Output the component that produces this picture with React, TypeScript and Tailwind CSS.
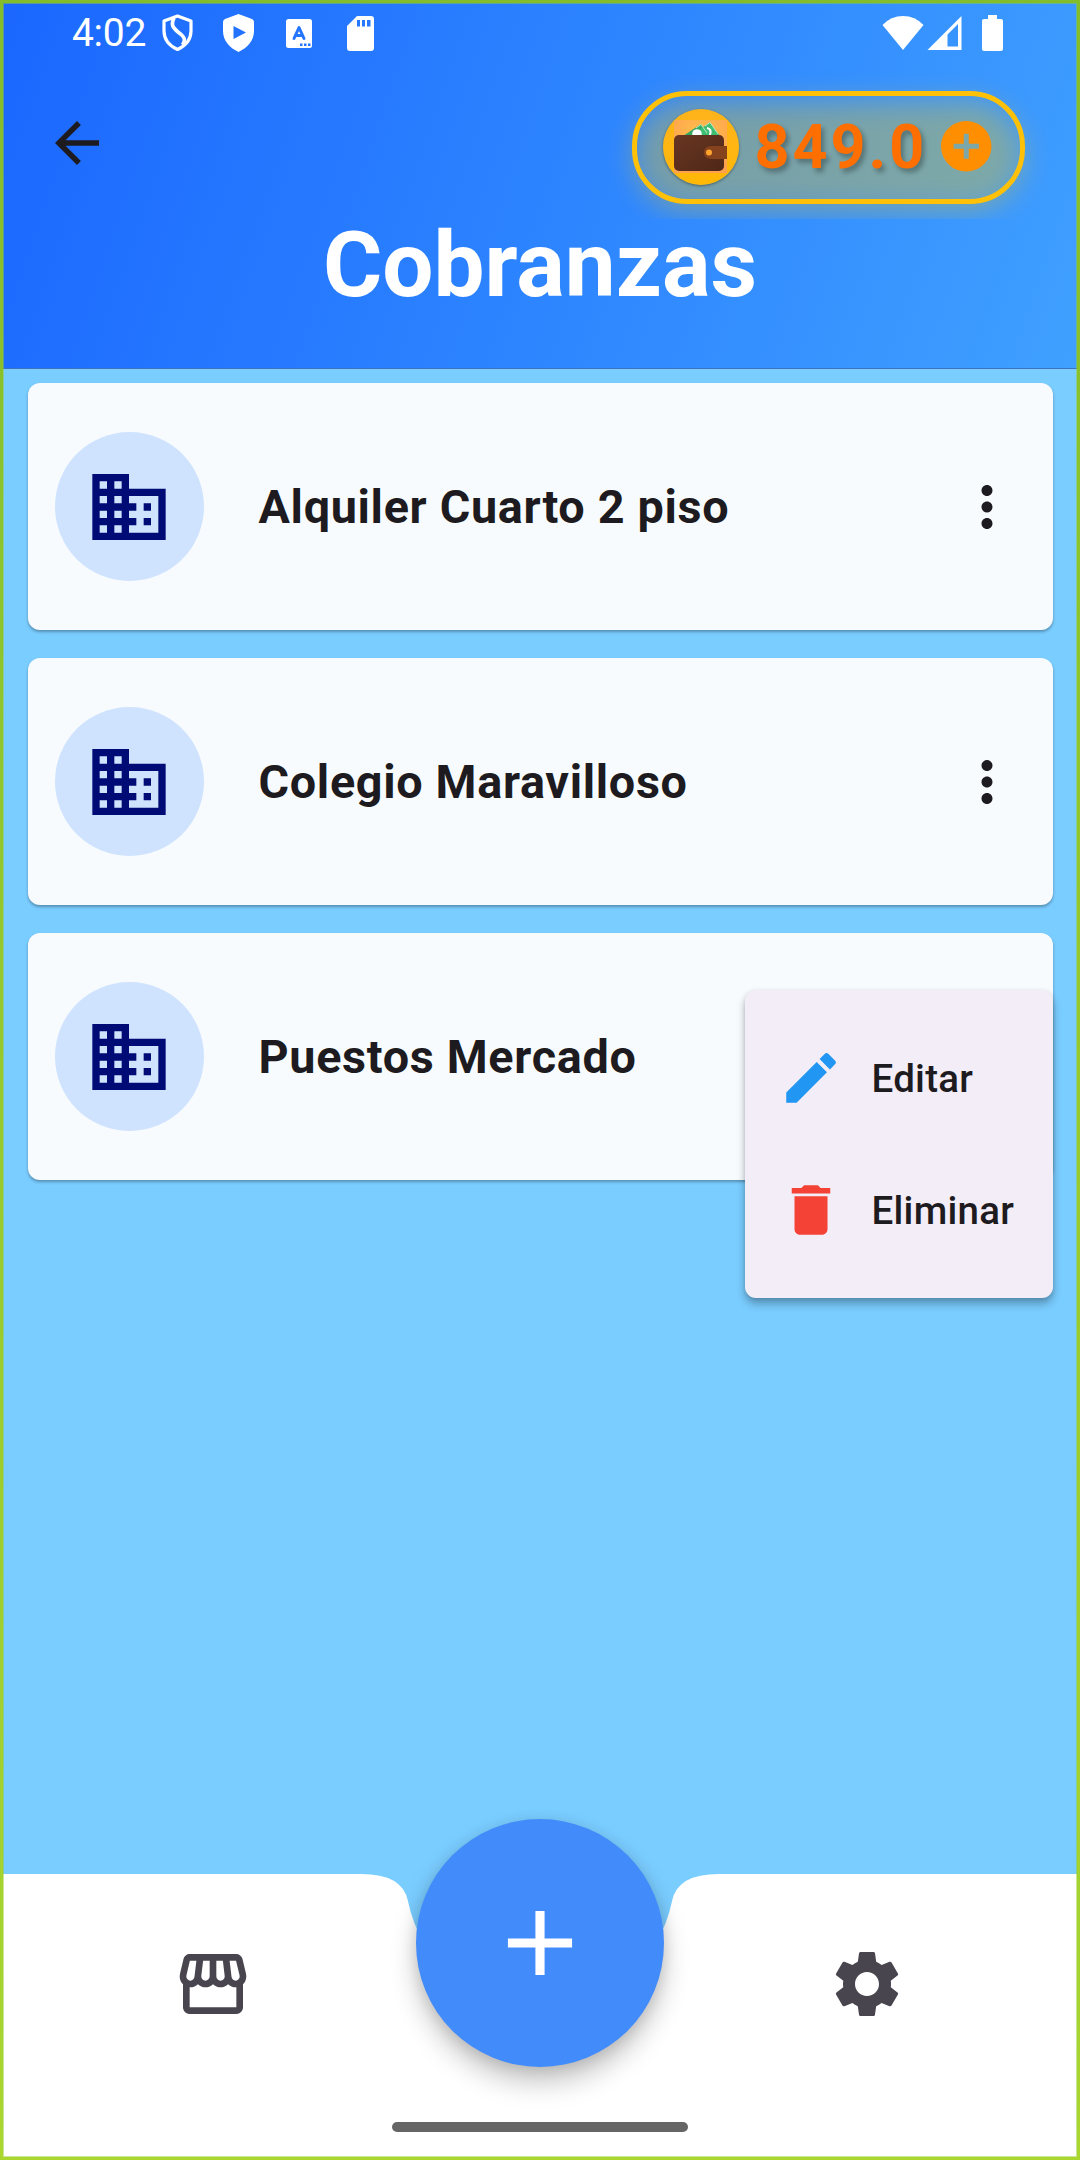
import React from "react";
import { MdArrowBack, MdAddCircle, MdBusiness, MdMoreVert, MdEdit, MdDelete, MdSettings, MdAdd, MdOutlineStorefront } from "react-icons/md";

function StatusBar() {
  return (
    <div className="flex h-[66px] items-center justify-between pl-[72px] pr-[77px] text-white">
      <div className="flex items-center">
        <span className="w-[76px] text-[39px] leading-[66px] tracking-[-0.3px]">4:02</span>
        <svg className="ml-[14px] h-[38px] w-[31px]" viewBox="0 0 31 38" fill="none" stroke="currentColor" strokeWidth="3.2">
          <path d="M15.500 2 L29 7 V17 C29 26 23 32 15.500 35.500 C8 32 2 26 2 17 V7 Z" strokeLinejoin="round" />
          <path d="M12 4 C9 10 10 13 16 18 C23 23 24 26 20.500 31" strokeWidth="3.600" />
        </svg>
        <svg className="ml-[30px] h-[38px] w-[31px]" viewBox="0 0 31 38" fill="currentColor">
          <path fillRule="evenodd" d="M15.500 0 L29 5 Q31 6 31 8 V17 C31 27 24 34 15.500 38 C7 34 0 27 0 17 V8 Q0 6 2 5 Z M10.500 12 V25 L23 18.500 Z" />
        </svg>
        <svg className="ml-[32px] h-[29px] w-[26px]" viewBox="0 0 26 29">
          <rect width="26" height="29" rx="2.500" fill="white" />
          <path d="M8 19.500 L13 8.500 L18 19.500 M9.500 16.500 H16.500" stroke="#2475ff" strokeWidth="3" fill="none" strokeLinejoin="round" strokeLinecap="round" />
          <path d="M14 24.500h2.500v2.500h-2.500zM18 24.500h2.500v2.500h-2.500zM22 24.500h2.500v2.500h-2.500z" fill="#2475ff" />
        </svg>
        <svg className="ml-[35px] h-[35px] w-[27px]" viewBox="0 0 27 35" fill="currentColor">
          <path fillRule="evenodd" d="M10 0 H24 Q27 0 27 3 V32 Q27 35 24 35 H3 Q0 35 0 32 V10 Z M10 4 V10.500 H13 V4 Z M15 4 V10.500 H18 V4 Z M20 4 V10.500 H23.500 V4 Z" />
        </svg>
      </div>
      <div className="flex items-center text-white">
        <svg className="h-[36px] w-[42px]" viewBox="0 0 42 36" fill="currentColor"><path d="M0.500 10 Q9 1 21 1 Q33 1 41.500 10 L21 35 Z" /></svg>
        <svg className="ml-[3px] h-[36px] w-[35px]" viewBox="0 0 35 36" fill="currentColor"><path fillRule="evenodd" d="M34.500 1 V35 H0.500 Z M31 9 L20.500 19.500 V31.500 H31 Z" /></svg>
        <svg className="ml-[20px] h-[36px] w-[21px]" viewBox="0 0 21 36" fill="currentColor"><path d="M6 0 H15 V4 H19 Q21 4 21 6 V34 Q21 36 19 36 H2 Q0 36 0 34 V6 Q0 4 2 4 H6 Z" /></svg>
      </div>
    </div>
  );
}

function Wallet() {
  return (
    <svg className="h-[53px] w-[53px]" viewBox="0 0 53 53">
      <defs>
        <linearGradient id="leather" x1="0" y1="0" x2="1" y2="1">
          <stop offset="0" stopColor="#693621" />
          <stop offset="1" stopColor="#4e2718" />
        </linearGradient>
        <radialGradient id="backdrop" cx="0.5" cy="0.3" r="0.7">
          <stop offset="0" stopColor="#ffc04a" />
          <stop offset="1" stopColor="#ffa24f" />
        </radialGradient>
      </defs>
      <rect width="53" height="53" fill="url(#backdrop)" />
      <path d="M9 16 L27 4 L34 16 Z" fill="#35a862" />
      <path d="M16 16 L36 2.500 L46 16 Z" fill="#3fbd70" />
      <path d="M22 8 L27 4.500 L33 13 M31 6 L36 2.500 L44 14" stroke="#b9e8c7" strokeWidth="1" fill="none" />
      <path d="M33 8 Q38 9 36 15" stroke="#fff" strokeWidth="2.200" fill="none" />
      <circle cx="23" cy="14" r="4.800" fill="#fff" />
      <rect x="0" y="15" width="50" height="36" rx="5" fill="url(#leather)" />
      <path d="M53 26 H37 Q30 26 30 32.500 Q30 39 37 39 H53 Z" fill="#85421d" />
      <circle cx="35" cy="32.500" r="3" fill="#ffa52e" />
    </svg>
  );
}

function Balance() {
  return (
    <div className="relative h-[113px] w-[393px]">
      <div className="absolute -inset-x-[55px] -bottom-[15px] -top-[60px] overflow-hidden">
        <div className="absolute inset-x-[57px] bottom-[9px] top-[70px] rounded-[56px] bg-[#ffc800]/34 blur-[14px]" />
      </div>
      <div className="relative flex h-full items-center rounded-[55px] border-[5.5px] border-[#ffc107] pl-[25.500px]">
        <div className="mb-[2px] flex size-[76px] shrink-0 items-center justify-center rounded-full bg-linear-to-b from-[#ffb31a] to-[#ffb805] shadow-[0_1px_3px_rgba(0,0,0,0.4)]">
          <Wallet />
        </div>
        <span className="mb-[2px] ml-[16px] w-[177px] text-[61px] font-bold leading-[70px] tracking-[3px] text-[#ff6f00] [text-shadow:3px_4px_5px_rgba(0,0,0,0.3)]">849.0</span>
        <MdAddCircle className="mb-[2px] ml-[4.500px] size-[60.500px] shrink-0 text-[#ff8f00]" />
      </div>
    </div>
  );
}

function Header() {
  return (
    <header className="h-[368.500px] border-b border-[#3d72bf] bg-[linear-gradient(109deg,#1b67ff_0%,#2e86ff_55%,#40a0ff_100%)]">
      <StatusBar />
      <div className="flex justify-between pl-[44px] pr-[55px] pt-[25px]">
        <MdArrowBack className="mt-[19px] size-[66px] text-[#1d1b20]" />
        <Balance />
      </div>
      <h1 className="relative mt-[8px] text-center text-[90.750px] font-bold leading-[106px] text-white">Cobranzas</h1>
    </header>
  );
}

function Card({ title }: { title: string }) {
  return (
    <div className="flex h-[247.500px] shrink-0 items-center rounded-[12px] bg-[#f7fbfe] pl-[27.500px] pr-[33px] shadow-[0_2px_3px_rgba(0,0,0,0.3)]">
      <div className="flex size-[148.500px] items-center justify-center rounded-full bg-[#cfe3ff] pt-[1px]">
        <MdBusiness className="size-[88px] text-[#000b75]" />
      </div>
      <span className="ml-[55px] mt-[1px] flex-1 text-[46.750px] font-bold leading-[56px] tracking-[0.68px] text-[#1d1b20]">{title}</span>
      <MdMoreVert className="mt-[1px] size-[66px] text-[#1d1b20]" />
    </div>
  );
}

function Menu() {
  return (
    <div className="absolute left-[745px] top-[989.500px] h-[308px] w-[308px] rounded-[11px] bg-[#f3edf7] py-[22.500px] shadow-[0_6px_9px_rgba(0,0,0,0.28),0_1px_4px_rgba(0,0,0,0.1)]">
      <div className="flex h-[132px] items-center pl-[33px]">
        <MdEdit className="size-[66px] text-[#2196f3]" />
        <span className="ml-[27.500px] mt-[1px] text-[38.500px] font-medium tracking-[0.25px] text-[#1d1b20]">Editar</span>
      </div>
      <div className="flex h-[132px] items-center pl-[33px]">
        <MdDelete className="size-[66px] text-[#f44336]" />
        <span className="ml-[27.500px] mt-[1px] text-[38.500px] font-medium tracking-[0.25px] text-[#1d1b20]">Eliminar</span>
      </div>
    </div>
  );
}

function BottomBar() {
  return (
    <footer className="relative h-[286px] shrink-0">
      <svg className="absolute inset-0 h-full w-full" viewBox="0 0 1080 286">
        <path fill="white" d="M0 0 H361.250 Q402.500 0 407.900 26.800 A134.750 134.750 0 0 0 672.100 26.800 Q677.500 0 718.750 0 H1080 V286 H0 Z" />
      </svg>
      <div className="relative flex justify-between px-[173px] pt-[70px] text-[#49454f]">
        <MdOutlineStorefront className="size-[80px]" />
        <MdSettings className="size-[80px]" />
      </div>
      <button aria-label="Agregar" className="absolute left-[416.250px] top-[-55px] flex size-[247.500px] items-center justify-center rounded-full bg-[#428bfa] text-white shadow-[0_16px_27px_rgba(0,0,0,0.22),0_3px_14px_rgba(0,0,0,0.12)]">
        <MdAdd className="size-[110px]" />
      </button>
      <div className="absolute bottom-[28px] left-[392px] h-[10px] w-[296px] rounded-full bg-[#666]" />
    </footer>
  );
}

export default function App() {
  return (
    <div className="relative flex h-[2160px] w-[1080px] flex-col overflow-hidden bg-[#7acdff] font-['Roboto',sans-serif]">
      <Header />
      <main className="flex flex-1 flex-col gap-[27.500px] px-[27.500px] pt-[14px]">
        <Card title="Alquiler Cuarto 2 piso" />
        <Card title="Colegio Maravilloso" />
        <Card title="Puestos Mercado" />
      </main>
      <BottomBar />
      <Menu />
      <div className="pointer-events-none absolute inset-0 border-[3px] [border-image:linear-gradient(#84bd2b,#a9d62f)_1]" />
      <div className="pointer-events-none absolute inset-[3px] border border-[#97cc2e]/50" />
    </div>
  );
}
